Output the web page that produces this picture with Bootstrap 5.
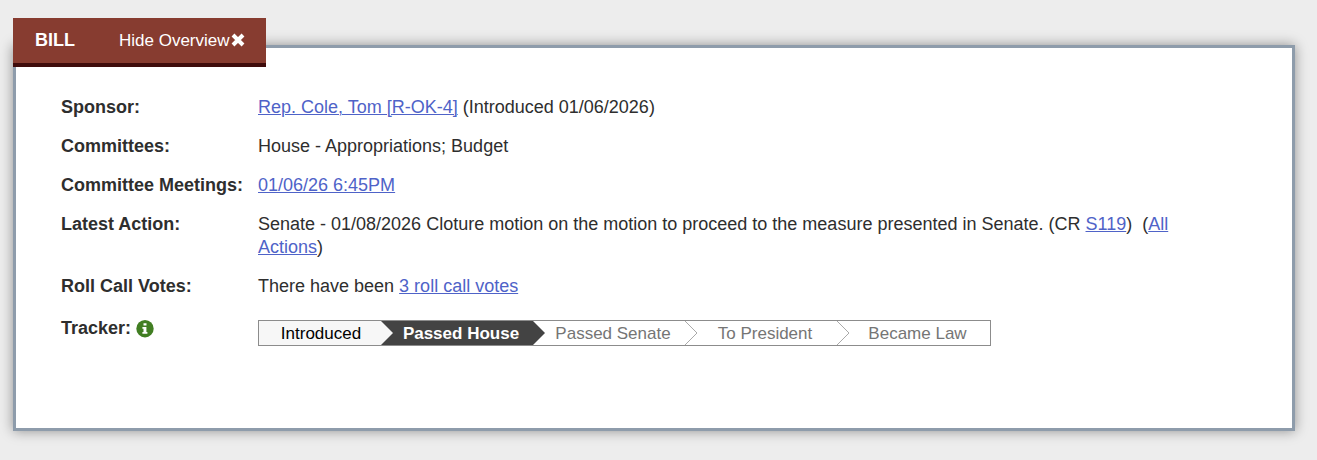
<!DOCTYPE html>
<html lang="en">
<head>
<meta charset="utf-8">
<meta name="viewport" content="width=device-width, initial-scale=1">
<title>Bill overview</title>
<link href="https://cdn.jsdelivr.net/npm/bootstrap@5.3.0/dist/css/bootstrap.min.css" rel="stylesheet">
<style>
body { background: #ededed; color: #2e2e2e; font-family: "Liberation Sans", Arial, sans-serif; font-size: 18px; line-height: 23px; }
main { padding: 45px 22px 29px 13px; }
.overview { border: 3px solid #8e9cab; background: #fff; box-shadow: 0 0 12px rgba(0,0,0,.4); }
.overview a { color: #4f63c8; text-decoration: underline; text-decoration-thickness: 1px; }
.bill-tab { margin: -30px 0 0 -3px; width: max-content; height: 49px; background: #873c30; border-bottom: 4px solid #3f0c0c; color: #fff; padding: 0 21px 0 22px; gap: 44px; }
.bill-tab button { font-size: 17px; color: #fff; gap: 1px; }
.bill-tab button svg { margin-bottom: 2px; }
.facts { padding: 29px 45px 82px; row-gap: 16px; display: grid; grid-template-columns: 181px minmax(0, 1fr); column-gap: 16px; }
.facts dt, .facts dd { margin: 0; }
.facts dt { white-space: nowrap; }
.action-text { max-width: 940px; }
.tracker-label { padding-top: 3px; gap: 5px; }
.tracker { max-width: 733px; height: 26px; margin: 6px 0 0; border: 1px solid #8c8c8c; font-size: 17px; line-height: 24px; color: #757575; }
.tracker li { flex: 0 1 152px; position: relative; padding: 1px 0 0 8px; line-height: 23px; text-align: center; white-space: nowrap; }
.tracker li:first-child { flex-basis: 122px; padding-left: 2px; background: #f7f7f7; color: #000; }
.tracker li:last-child { flex-grow: 1; }
.tracker li.current { background: #434343; color: #fff; font-weight: bold; }
.tracker svg { position: absolute; left: 100%; top: 0; z-index: 1; }
@media (max-width: 700px) {
  .facts { grid-template-columns: minmax(0, 1fr); padding: 29px 20px; }
  .tracker { flex-direction: column; height: auto; }
  .tracker li, .tracker li:first-child { flex-basis: auto; }
  .tracker svg { display: none; }
}
</style>
</head>
<body>
<main>
  <section class="overview" aria-label="Bill overview">
    <div class="bill-tab d-flex align-items-center position-relative">
      <strong>BILL</strong>
      <button type="button" class="btn p-0 border-0 d-flex align-items-center">Hide Overview
        <svg width="14" height="14" viewBox="0 0 14 14" aria-hidden="true"><path d="M2 2l10 10M12 2L2 12" stroke="#fff" stroke-width="4" fill="none"/></svg>
      </button>
    </div>
    <dl class="facts mb-0">
      <dt>Sponsor:</dt>
      <dd><a href="#">Rep. Cole, Tom [R-OK-4]</a> (Introduced 01/06/2026)</dd>
      <dt>Committees:</dt>
      <dd>House - Appropriations; Budget</dd>
      <dt>Committee Meetings:</dt>
      <dd><a href="#">01/06/26 6:45PM</a></dd>
      <dt>Latest Action:</dt>
      <dd class="action-text">Senate - 01/08/2026 Cloture motion on the motion to proceed to the measure presented in Senate. (CR <a href="#">S119</a>)&nbsp; (<a href="#">All Actions</a>)</dd>
      <dt>Roll Call Votes:</dt>
      <dd>There have been <a href="#">3 roll call votes</a></dd>
      <dt class="tracker-label d-flex align-items-center align-self-start">Tracker:
        <svg width="18" height="18" viewBox="0 0 18 18" role="img" aria-label="Information"><circle cx="9" cy="8.7" r="8.7" fill="#417e22"/><path d="M7.5 3.2h3v2.4h-3zM6.4 6.9h4v5h1v1.9h-5v-1.9h1.1V8.8H6.4z" fill="#fff"/></svg>
      </dt>
      <dd>
        <ol class="tracker list-unstyled d-flex">
          <li>Introduced<svg width="13" height="24" viewBox="0 0 13 24" aria-hidden="true"><path d="M0 0L12 12 0 24z" fill="#f7f7f7"/></svg></li>
          <li class="current">Passed House<svg width="13" height="24" viewBox="0 0 13 24" aria-hidden="true"><path d="M0 0L12 12 0 24z" fill="#434343"/></svg></li>
          <li>Passed Senate<svg width="13" height="24" viewBox="0 0 13 24" aria-hidden="true"><path d="M0 0L12 12 0 24" fill="none" stroke="#aaa"/></svg></li>
          <li>To President<svg width="13" height="24" viewBox="0 0 13 24" aria-hidden="true"><path d="M0 0L12 12 0 24" fill="none" stroke="#aaa"/></svg></li>
          <li>Became Law</li>
        </ol>
      </dd>
    </dl>
  </section>
</main>
<script src="https://cdn.jsdelivr.net/npm/bootstrap@5.3.0/dist/js/bootstrap.bundle.min.js"></script>
</body>
</html>
